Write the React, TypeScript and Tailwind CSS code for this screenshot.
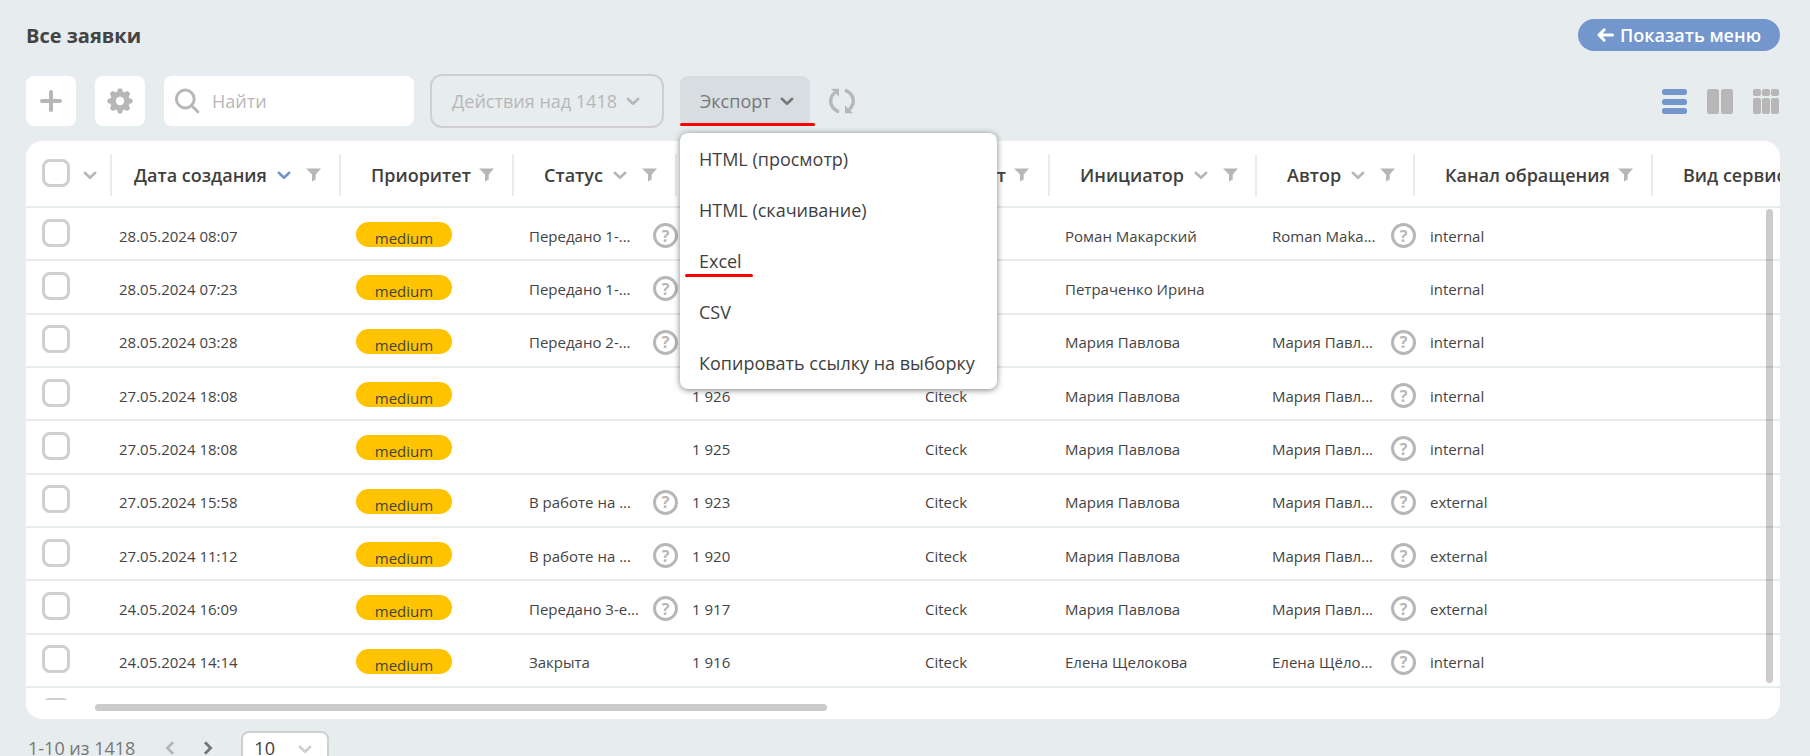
import React from "react";

type IconProps = { className?: string };

const ChevronDown = ({ className = "" }: IconProps) => (
  <svg viewBox="0 0 14 10" className={`h-[10px] w-[14px] shrink-0 ${className}`} fill="none" stroke="currentColor" strokeWidth="2.6" strokeLinecap="round" strokeLinejoin="round" aria-hidden="true">
    <path d="M1.8 2.8l5.2 5 5.2-5" />
  </svg>
);

const ChevronSide = ({ flip = false }: { flip?: boolean }) => (
  <svg viewBox="0 0 10 14" className="h-[14px] w-[10px]" fill="none" stroke="currentColor" strokeWidth="2.8" strokeLinejoin="miter" aria-hidden="true">
    <path d={flip ? "M8 1.2L2.4 7L8 12.8" : "M2 1.2L7.6 7L2 12.8"} />
  </svg>
);

const Funnel = () => (
  <svg viewBox="0 0 15 14" className="h-[14px] w-[15px] shrink-0 text-[#b7b7b7]" fill="currentColor" aria-hidden="true">
    <path d="M0 .5h15L9.7 6.4v5.2L6 13.6V6.4z" />
  </svg>
);

const Gear = () => (
  <svg viewBox="0 0 26 26" className="h-[26px] w-[26px]" aria-hidden="true">
    <g fill="currentColor">
      {[0, 45, 90, 135, 180, 225, 270, 315].map((a) => (
        <path key={a} d="M9.7 5L10.9 1.2Q11.2 .4 12 .4h2q.8 0 1.1.8L16.3 5z" transform={`rotate(${a} 13 13)`} />
      ))}
    </g>
    <circle cx="13" cy="13" r="7" fill="none" stroke="currentColor" strokeWidth="5.6" />
  </svg>
);

const Refresh = () => (
  <svg viewBox="0 0 28 28" className="h-7 w-7" aria-hidden="true">
    <g fill="none" stroke="currentColor" strokeWidth="3.4">
      <path d="M11 24.9C1.2 20.6 .4 11.6 6.8 5.4" />
      <path d="M17 3.1C26.8 7.4 27.6 16.4 21.2 22.6" />
    </g>
    <path d="M3 1.8h8v8z" fill="currentColor" />
    <path d="M25 26.2h-8v-8z" fill="currentColor" />
  </svg>
);

const HelpIcon = () => (
  <span className="flex h-[25px] w-[25px] shrink-0 items-center justify-center rounded-full border-[3px] border-[#b7b7b7] text-[16px] leading-none font-bold text-[#b7b7b7]">
    ?
  </span>
);

const Check = ({ label }: { label: string }) => (
  <input
    type="checkbox"
    aria-label={label}
    className="block h-7 w-7 shrink-0 appearance-none rounded-lg border-[3px] border-[#cfcfcf] bg-white checked:bg-[#7396cd]"
  />
);

type Column = { title: string; sort?: "active" | "idle"; filter?: boolean; pad?: string };

const columns: Column[] = [
  { title: "Дата создания", sort: "active", filter: true, pad: "pl-[22px]" },
  { title: "Приоритет", filter: true },
  { title: "Статус", sort: "idle", filter: true },
  { title: "" },
  { title: "Клиент", filter: true },
  { title: "Инициатор", sort: "idle", filter: true },
  { title: "Автор", sort: "idle", filter: true },
  { title: "Канал обращения", filter: true },
  { title: "Вид сервиса" },
];

type Row = { date: string; status?: string; num?: string; client?: string; initiator: string; author?: string; channel: string };

const rows: Row[] = [
  { date: "28.05.2024 08:07", status: "Передано 1-...", initiator: "Роман Макарский", author: "Roman Maka...", channel: "internal" },
  { date: "28.05.2024 07:23", status: "Передано 1-...", initiator: "Петраченко Ирина", channel: "internal" },
  { date: "28.05.2024 03:28", status: "Передано 2-...", initiator: "Мария Павлова", author: "Мария Павл...", channel: "internal" },
  { date: "27.05.2024 18:08", num: "1 926", client: "Citeck", initiator: "Мария Павлова", author: "Мария Павл...", channel: "internal" },
  { date: "27.05.2024 18:08", num: "1 925", client: "Citeck", initiator: "Мария Павлова", author: "Мария Павл...", channel: "internal" },
  { date: "27.05.2024 15:58", status: "В работе на ...", num: "1 923", client: "Citeck", initiator: "Мария Павлова", author: "Мария Павл...", channel: "external" },
  { date: "27.05.2024 11:12", status: "В работе на ...", num: "1 920", client: "Citeck", initiator: "Мария Павлова", author: "Мария Павл...", channel: "external" },
  { date: "24.05.2024 16:09", status: "Передано 3-е...", num: "1 917", client: "Citeck", initiator: "Мария Павлова", author: "Мария Павл...", channel: "external" },
  { date: "24.05.2024 14:14", status: "Закрыта", num: "1 916", client: "Citeck", initiator: "Елена Щелокова", author: "Елена Щёло...", channel: "internal" },
];

const exportItems = ["HTML (просмотр)", "HTML (скачивание)", "Excel", "CSV", "Копировать ссылку на выборку"];

const Cell = ({ children, help = false, pad = "pl-[15px]" }: { children?: React.ReactNode; help?: boolean; pad?: string }) => (
  <td className={`border-b-2 border-[#e7ecef] p-0 align-middle ${pad}`}>
    <div className={`flex items-center justify-between pt-1 ${help ? "-mr-px" : ""}`}>
      <span>{children}</span>
      {help && <HelpIcon />}
    </div>
  </td>
);

function RequestsTable() {
  return (
    <table className="h-[597px] w-full table-fixed border-separate border-spacing-0 text-[15px] leading-5 whitespace-nowrap text-[#444]">
      <colgroup>
        <col className="w-[86px]" />
        <col className="w-[229px]" />
        <col className="w-[173px]" />
        <col className="w-[163px]" />
        <col className="w-[233px]" />
        <col className="w-[140px]" />
        <col className="w-[207px]" />
        <col className="w-[158px]" />
        <col className="w-[238px]" />
        <col />
      </colgroup>
      <thead>
        <tr className="h-[67px]">
          <th className="border-b-2 border-[#e7ecef] p-0 pt-0.5">
            <div className="flex h-[42px] items-center gap-[13px] border-r-2 border-[#e7ecef] pb-1 pl-4">
              <Check label="Выбрать все" />
              <span className="pt-1 text-[#b7b7b7]">
                <ChevronDown />
              </span>
            </div>
          </th>
          {columns.map((c, i) => (
            <th key={i} className="overflow-hidden border-b-2 border-[#e7ecef] p-0 pt-[3px] text-left text-[18px] leading-6 font-semibold text-[#3f3f3f]">
              <div className={`flex h-[42px] items-center ${c.pad ?? "pl-[30px]"} ${i < columns.length - 1 ? "border-r-2 border-[#e7ecef]" : ""}`}>
                <span>{c.title}</span>
                {c.sort && (
                  <span className={c.sort === "active" ? "ml-[10px] text-[#7396cd]" : "ml-[10px] text-[#b7b7b7]"}>
                    <ChevronDown />
                  </span>
                )}
                {c.filter && (
                  <span className={c.sort ? "ml-[15px]" : "ml-2"}>
                    <Funnel />
                  </span>
                )}
              </div>
            </th>
          ))}
        </tr>
      </thead>
      <tbody>
        {rows.map((r, i) => (
          <tr key={i}>
            <td className="border-b-2 border-[#e7ecef] p-0 pb-0.5 pl-4 align-middle">
              <Check label={`Выбрать заявку ${r.date}`} />
            </td>
            <Cell pad="pl-[7px]">{r.date}</Cell>
            <td className="border-b-2 border-[#e7ecef] p-0 pt-0.5 pl-[15px] align-middle">
              <span className="block h-[25px] w-24 rounded-full bg-[#ffc300] pt-[6px] text-center leading-5">medium</span>
            </td>
            <Cell help={!!r.status?.endsWith("...")}>{r.status}</Cell>
            <Cell>{r.num}</Cell>
            <Cell>{r.client}</Cell>
            <Cell>{r.initiator}</Cell>
            <Cell help={!!r.author}>{r.author}</Cell>
            <Cell>{r.channel}</Cell>
            <Cell />
          </tr>
        ))}
        <tr>
          <td className="p-0 pb-0.5 pl-4 align-middle">
            <Check label="Выбрать заявку" />
          </td>
          <td colSpan={9} />
        </tr>
      </tbody>
    </table>
  );
}

export default function App() {
  return (
    <div className="h-screen overflow-hidden bg-[#e7ecef] pr-[30px] pl-[26px] font-['Open_Sans','Noto_Sans',sans-serif] text-[18px] leading-6 text-[#444]">
      <header className="flex items-center justify-between pt-[19px]">
        <h1 className="pt-0.5 text-[20px] leading-[30px] font-bold">Все заявки</h1>
        <button className="flex h-8 items-center gap-[6px] rounded-full bg-[#7396cd] px-[19px] font-semibold text-white">
          <svg viewBox="0 0 17 14" className="h-[14px] w-[17px]" fill="none" stroke="currentColor" strokeWidth="3" strokeLinecap="round" strokeLinejoin="round" aria-hidden="true">
            <path d="M7.2 1.8L2 7l5.2 5.2M2.5 7h13" />
          </svg>
          Показать меню
        </button>
      </header>

      <div className="mt-[23px] flex h-[54px] items-center text-[#b7b7b7]">
        <button aria-label="Создать" className="flex h-[50px] w-[50px] items-center justify-center rounded-lg bg-white">
          <svg viewBox="0 0 22 22" className="h-[22px] w-[22px]" stroke="currentColor" strokeWidth="4" strokeLinecap="round" aria-hidden="true">
            <path d="M11 2v18M2 11h18" />
          </svg>
        </button>
        <button aria-label="Настройки" className="ml-[19px] flex h-[50px] w-[50px] items-center justify-center rounded-lg bg-white">
          <Gear />
        </button>
        <label className="ml-[19px] flex h-[50px] w-[250px] items-center gap-3 rounded-lg bg-white pl-[10px]">
          <svg viewBox="0 0 26 26" className="h-[26px] w-[26px] shrink-0" fill="none" stroke="currentColor" strokeWidth="3" strokeLinecap="round" aria-hidden="true">
            <circle cx="11.3" cy="11" r="8.9" />
            <path d="M17.8 17.8l6 6" />
          </svg>
          <input type="text" aria-label="Найти" placeholder="Найти" className="w-full min-w-0 bg-transparent text-[18px] leading-6 font-medium outline-none placeholder:text-[#b7b7b7]" />
        </label>
        <button disabled className="ml-4 flex h-[54px] items-center gap-[9px] rounded-xl border-2 border-[#cfcfcf] pr-[22px] pl-5 font-medium">
          Действия над 1418
          <ChevronDown />
        </button>
        <div className="relative ml-4">
          <button aria-haspopup="menu" aria-expanded="true" className="flex h-[50px] items-center gap-[9px] rounded-lg bg-[#d8dde2] pr-4 pl-5 font-medium text-[#777]">
            Экспорт
            <ChevronDown />
          </button>
          <span className="absolute bottom-0 left-0 h-[3px] w-[135px] rounded-full bg-[#f00]" />
          <div role="menu" className="absolute top-[57px] left-0 z-10 min-w-[317px] rounded-lg bg-white pr-[18px] pb-px pl-[19px] shadow-[0_1px_6px_rgba(0,0,0,0.5)]">
            {exportItems.map((t) => (
              <button key={t} role="menuitem" className="relative flex h-[51px] items-center font-medium whitespace-nowrap text-[#3f3f3f]">
                {t}
                {t === "Excel" && <span className="absolute bottom-[9px] left-[-14px] h-[3px] w-[68px] rounded-full bg-[#f00]" />}
              </button>
            ))}
          </div>
        </div>
        <button aria-label="Обновить" className="ml-[18px]">
          <Refresh />
        </button>
        <div className="ml-auto flex items-center gap-5 pr-px">
          <button aria-label="Список" className="text-[#7396cd]">
            <svg viewBox="0 0 25 25" className="h-[25px] w-[25px]" fill="currentColor" aria-hidden="true">
              <rect width="25" height="6" rx="2.5" />
              <rect y="10" width="25" height="6" rx="2.5" />
              <rect y="19" width="25" height="6" rx="2.5" />
            </svg>
          </button>
          <button aria-label="Просмотр">
            <svg viewBox="0 0 26 25" className="h-[25px] w-[26px]" fill="currentColor" aria-hidden="true">
              <rect width="12" height="25" rx="2.5" />
              <rect x="14" width="12" height="25" rx="2.5" />
            </svg>
          </button>
          <button aria-label="Канбан">
            <svg viewBox="0 0 26 25" className="h-[25px] w-[26px]" fill="currentColor" aria-hidden="true">
              {[0, 9, 18].map((x) => (
                <g key={x}>
                  <rect x={x} width="8" height="7" rx="2" />
                  <rect x={x} y="9" width="8" height="16" rx="2" />
                </g>
              ))}
            </svg>
          </button>
        </div>
      </div>

      <main className="relative mt-[13px] overflow-hidden rounded-2xl bg-white">
        <div className="h-[calc(100vh-197px)] overflow-hidden">
          <RequestsTable />
        </div>
        <div className="pt-1 pb-2 pl-[69px]">
          <div className="h-[7px] w-[732px] rounded-full bg-[#cbcbcb]" />
        </div>
        <span className="absolute top-[68px] right-[7px] bottom-9 w-[7px] rounded-full bg-black/20" />
      </main>

      <footer className="mt-3 flex items-center pl-[2px] font-medium text-[#777]">
        <span>1-10 из 1418</span>
        <button aria-label="Назад" className="ml-[30px] text-[#b7b7b7]">
          <ChevronSide flip />
        </button>
        <button aria-label="Вперёд" className="ml-7">
          <ChevronSide />
        </button>
        <span className="relative ml-7">
          <select aria-label="Строк на странице" defaultValue="10" className="block h-[34px] w-[88px] appearance-none rounded-lg border-2 border-[#cfcfcf] bg-white pl-[11px] text-[18px] leading-6 font-medium text-[#3f3f3f]">
            <option>10</option>
          </select>
          <span className="pointer-events-none absolute top-[13px] right-[17px] text-[#cfcfcf]">
            <ChevronDown />
          </span>
        </span>
      </footer>
    </div>
  );
}
